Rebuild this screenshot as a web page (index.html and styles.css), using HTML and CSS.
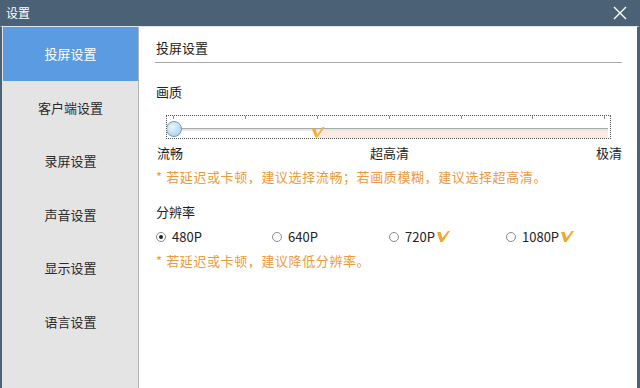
FILE: index.html
```html
<!DOCTYPE html>
<html lang="zh-CN">
<head>
<meta charset="utf-8">
<title>设置</title>
<link rel="stylesheet" href="styles.css">
</head>
<body>
<div class="window">
  <div class="titlebar">
    <span class="title">设置</span>
    <svg class="close" width="14" height="14" viewBox="0 0 14 14"><path d="M1 1L13 13M13 1L1 13" stroke="#fff" stroke-width="1.4" fill="none"/></svg>
  </div>
  <div class="body">
    <nav class="sidebar">
      <div class="nav-item active">投屏设置</div>
      <div class="nav-item">客户端设置</div>
      <div class="nav-item">录屏设置</div>
      <div class="nav-item">声音设置</div>
      <div class="nav-item">显示设置</div>
      <div class="nav-item">语言设置</div>
    </nav>
    <main class="content">
      <div class="section-title">投屏设置</div>
      <div class="label first">画质</div>
      <div class="slider">
        <svg width="443" height="22" viewBox="0 0 443 22">
          <defs>
            <radialGradient id="thumb" cx="0.4" cy="0.35" r="0.7">
              <stop offset="0" stop-color="#eaf6fd"/>
              <stop offset="1" stop-color="#a6d3f0"/>
            </radialGradient>
            <linearGradient id="vg" x1="0" y1="0" x2="1" y2="1">
              <stop offset="0" stop-color="#f2a21f"/>
              <stop offset="1" stop-color="#f7c24f"/>
            </linearGradient>
          </defs>
          <g stroke="#8a8a8a" stroke-width="1">
            <path d="M6.5 0V3M78.5 0V3M150.5 0V3M222.5 0V3M294.5 0V3M365.5 0V3M437.5 0V3"/>
          </g>
          <rect x="149" y="13" width="292" height="9" fill="#fcebe4"/>
          <rect x="7" y="13" width="434" height="2" fill="#e6e6e6"/>
          <line x1="7" y1="12.5" x2="441" y2="12.5" stroke="#a8a8a8" stroke-width="1"/>
          <circle cx="7" cy="13" r="7.5" fill="url(#thumb)" stroke="#6f9cc1" stroke-width="1"/>
          <path d="M145 12.5h3.4l2 6 5.2-7.5h2.2l-7.2 10.5h-2.4z" fill="url(#vg)"/>
        </svg>
      </div>
      <div class="scale">
        <span>流畅</span><span>超高清</span><span>极清</span>
      </div>
      <div class="hint">* 若延迟或卡顿，建议选择流畅；若画质模糊，建议选择超高清。</div>
      <div class="label second">分辨率</div>
      <div class="radios">
        <label class="radio"><span class="dot checked"></span>480P</label>
        <label class="radio"><span class="dot"></span>640P</label>
        <label class="radio"><span class="dot"></span>720P<svg class="vip" width="13" height="11" viewBox="0 0 13 11"><path d="M0 1h3.6l1.9 6L10.8 0H13L5.6 11H3.2z" fill="#f2a82c"/></svg></label>
        <label class="radio"><span class="dot"></span>1080P<svg class="vip" width="13" height="11" viewBox="0 0 13 11"><path d="M0 1h3.6l1.9 6L10.8 0H13L5.6 11H3.2z" fill="#f2a82c"/></svg></label>
      </div>
      <div class="hint hint2">* 若延迟或卡顿，建议降低分辨率。</div>
    </main>
  </div>
</div>
</body>
</html>
```
FILE: styles.css
```css
html, body {
  margin: 0;
  padding: 0;
}
body {
  width: 640px;
  height: 388px;
  overflow: hidden;
  font-family: "Noto Sans CJK SC", "Noto Sans", sans-serif;
  font-size: 13px;
  color: #222;
}
.window {
  display: flex;
  flex-direction: column;
  height: 388px;
}
.titlebar {
  height: 26px;
  background: #4b6176;
  display: flex;
  align-items: center;
  justify-content: space-between;
  padding: 0 13px 0 6px;
}
.title {
  color: #fff;
  font-size: 12px;
  line-height: 16px;
}
.close {
  display: block;
}
.body {
  flex: 1;
  display: flex;
  border-left: 2px solid #4b6176;
  border-right: 3px solid #4b6176;
  border-top: 1px solid #dfe5ea;
  min-height: 0;
}
.sidebar {
  width: 135px;
  background: #e4e4e4;
  border-right: 1px solid #b4b4b4;
  padding: 0 0 0 1px;
  box-sizing: content-box;
}
.nav-item {
  height: 53.5px;
  display: flex;
  align-items: center;
  justify-content: center;
  color: #2a2a2a;
  font-size: 13px;
}
.nav-item.active {
  background: #5b9be1;
  color: #fff;
}
.content {
  flex: 1;
  background: #fff;
  padding: 12px 15px 0 16px;
  display: flex;
  flex-direction: column;
}
.section-title {
  line-height: 18px;
  padding-bottom: 5px;
  border-bottom: 1px solid #a8a8a8;
  padding-left: 1px;
}
.label {
  line-height: 18px;
  padding-left: 1px;
}
.label.first {
  margin-top: 20px;
}
.label.second {
  margin-top: 17px;
}
.slider {
  margin: 14px 11px 0 11px;
  height: 22px;
  border: 1px dotted #555;
}
.slider svg {
  display: block;
}
.scale {
  margin-top: 5px;
  display: flex;
  justify-content: space-between;
  line-height: 18px;
  padding: 0 0 0 2px;
}
.hint {
  margin-top: 6px;
  line-height: 18px;
  color: #eb9a3c;
  padding-left: 1px;
  letter-spacing: 0.6px;
}
.radios {
  margin-top: 7px;
  display: grid;
  grid-template-columns: 116px 117px 117px 117px;
  line-height: 18px;
}
.radio {
  display: flex;
  align-items: center;
  padding-left: 1px;
}
.dot {
  width: 10px;
  height: 10px;
  border: 1px solid #8a8a8a;
  border-radius: 50%;
  box-sizing: border-box;
  margin-right: 6px;
  position: relative;
  background: #fff;
}
.dot.checked::after {
  content: "";
  position: absolute;
  left: 2px;
  top: 2px;
  width: 4px;
  height: 4px;
  border-radius: 50%;
  background: #222;
}
.vip {
  margin-left: 2px;
  margin-top: -2px;
}
.hint2 {
  margin-top: 6px;
}
```
